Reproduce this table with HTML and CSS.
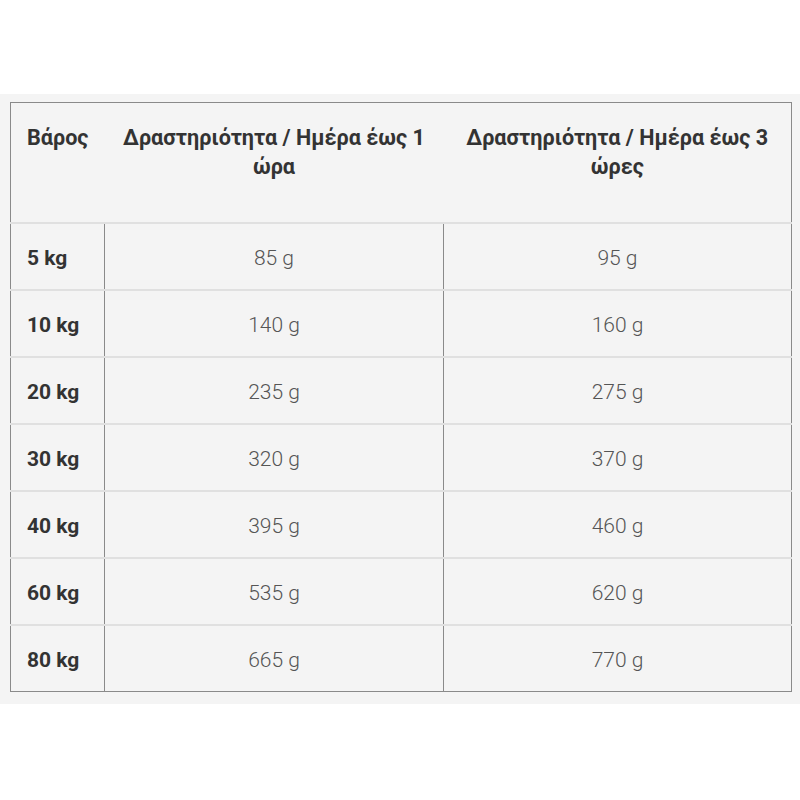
FILE: index.html
```html
<!DOCTYPE html>
<html lang="el">
<head>
<meta charset="utf-8">
<link rel="stylesheet" href="styles.css">
</head>
<body>
<div class="panel">
<table class="feed">
<colgroup><col class="c1"><col class="c2"><col class="c3"></colgroup>
<thead>
<tr><th class="first">Βάρος</th><th>Δραστηριότητα / Ημέρα έως 1 ώρα</th><th>Δραστηριότητα / Ημέρα έως 3 ώρες</th></tr>
</thead>
<tbody>
<tr><td class="first">5 kg</td><td>85 g</td><td>95 g</td></tr>
<tr><td class="first">10 kg</td><td>140 g</td><td>160 g</td></tr>
<tr><td class="first">20 kg</td><td>235 g</td><td>275 g</td></tr>
<tr><td class="first">30 kg</td><td>320 g</td><td>370 g</td></tr>
<tr><td class="first">40 kg</td><td>395 g</td><td>460 g</td></tr>
<tr><td class="first">60 kg</td><td>535 g</td><td>620 g</td></tr>
<tr><td class="first">80 kg</td><td>665 g</td><td>770 g</td></tr>
</tbody>
</table>
</div>
</body>
</html>
```
FILE: styles.css
```css
html, body {
  margin: 0;
  padding: 0;
  background: #ffffff;
  font-family: Roboto, "Noto Sans", "DejaVu Sans", sans-serif;
}
.panel {
  margin-top: 94px;
  background: #f4f4f4;
  padding: 8px 9px 12px 10px;
}
.feed {
  width: 781px;
  border-collapse: collapse;
  table-layout: fixed;
  border: 1px solid #8a8a8a;
  color: #333;
  font-size: 21px;
}
.c1 { width: 94px; }
.c2 { width: 339px; }
.c3 { width: 348px; }
.feed th {
  height: 120px;
  box-sizing: border-box;
  vertical-align: top;
  padding: 20px 14px 0;
  font-size: 21.6px;
  line-height: 29px;
  font-weight: 700;
  text-align: center;
  color: #333;
  border-bottom: 2px solid #e0e0e0;
}
.feed th.first {
  text-align: left;
  padding-left: 16px;
  padding-right: 0;
}
.feed td {
  height: 67px;
  box-sizing: border-box;
  padding: 3px 16px 0;
  text-align: center;
  vertical-align: middle;
  font-weight: 300;
  color: #555;
  border-left: 1px solid #8a8a8a;
  border-bottom: 2px solid #e0e0e0;
}
.feed tbody tr:last-child td {
  border-bottom: none;
}
.feed td.first {
  text-align: left;
  font-weight: 700;
  color: #333;
  border-left: none;
}
```
